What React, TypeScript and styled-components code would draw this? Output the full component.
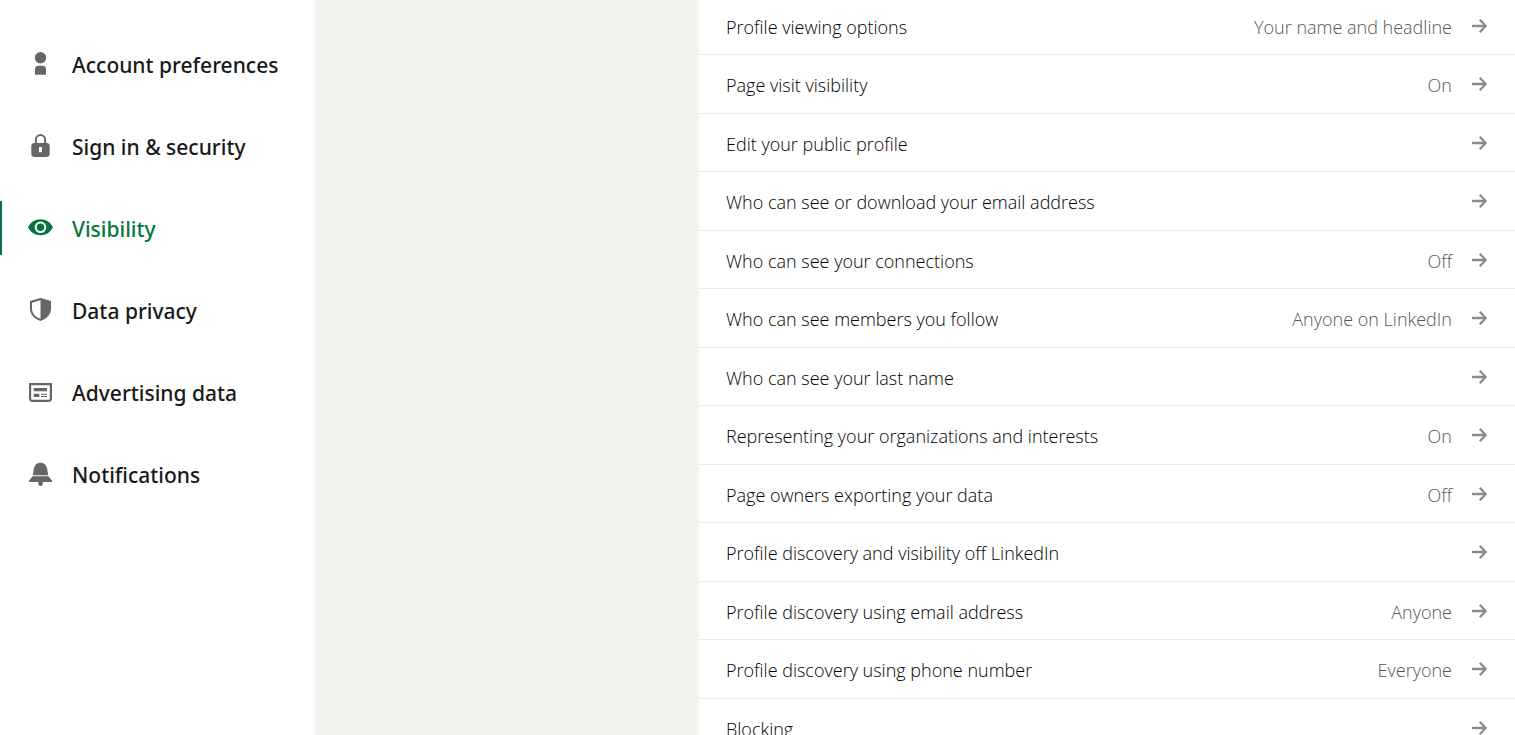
import React from "react";
import styled, { createGlobalStyle } from "styled-components";

const GlobalStyle = createGlobalStyle`
  *, *::before, *::after { box-sizing: border-box; }
  body {
    margin: 0;
    background: #f3f2ee;
    font-family: "Open Sans", "Noto Sans", sans-serif;
  }
`;

const Page = styled.div`
  display: grid;
  grid-template-columns: 315px minmax(0, 1fr);
  height: 100vh;
  overflow: hidden;
`;

const Sidebar = styled.nav`
  display: flex;
  flex-direction: column;
  gap: 28px;
  padding-top: 37px;
  background: #fff;
`;

const NavLink = styled.a<{ $active?: boolean }>`
  display: flex;
  align-items: center;
  gap: 18px;
  height: 54px;
  padding-left: 25px;
  border-left: 2px solid ${(p) => (p.$active ? "#057642" : "transparent")};
  color: ${(p) => (p.$active ? "#057642" : "#191919")};
  font-family: "Noto Sans", "Open Sans", sans-serif;
  font-size: 21px;
  font-weight: 500;
  line-height: 28px;
  text-decoration: none;
  white-space: nowrap;
`;

const NavIcon = styled.svg<{ $active?: boolean }>`
  flex: none;
  width: 27px;
  height: 28px;
  color: ${(p) => (p.$active ? "#057642" : "#666")};
`;

const NavLabel = styled.span`
  padding-top: 2px;
`;

const Main = styled.main`
  margin-left: 32%;
  background: #fff;
`;

const SettingsList = styled.ul`
  margin: -3px 0 0;
  padding: 0;
  list-style: none;
`;

const SettingItem = styled.li`
  height: 58px;
  border-bottom: 1px solid #ebebeb;

  &:nth-child(even) {
    height: 59px;
  }
`;

const SettingLink = styled.a`
  display: flex;
  align-items: center;
  gap: 20px;
  height: 100%;
  padding: 0 28px 0 27px;
  color: #000;
  font-size: 18px;
  font-weight: 300;
  line-height: 24px;
  text-decoration: none;
  white-space: nowrap;
`;

const SettingName = styled.span`
  flex: 1;
  padding-top: 2px;
`;

const SettingValue = styled.span`
  padding-top: 2px;
  color: #555;
`;

const Arrow = styled.svg`
  flex: none;
  width: 15px;
  height: 14px;
  color: #8c8c8c;
`;

const navItems: { label: string; active?: boolean; icon: React.ReactNode }[] = [
  {
    label: "Account preferences",
    icon: (
      <>
        <circle cx="13.5" cy="7.7" r="5.7" />
        <path d="M8 24.7v-5.4a3.6 3.6 0 0 1 3.6-3.6h3.8a3.6 3.6 0 0 1 3.6 3.6v5.4z" />
      </>
    ),
  },
  {
    label: "Sign in & security",
    icon: (
      <path
        fillRule="evenodd"
        d="M19.1 11h.3a3.3 3.3 0 0 1 3.3 3.3v7.4a3.3 3.3 0 0 1-3.3 3.3H7.6a3.3 3.3 0 0 1-3.3-3.3v-7.4A3.3 3.3 0 0 1 7.6 11h.3V7.6a5.6 5.6 0 0 1 11.2 0zM9.9 11h7.2V7.6a3.6 3.6 0 0 0-7.2 0zM12 15v5.3h3V15z"
      />
    ),
  },
  {
    label: "Visibility",
    active: true,
    icon: (
      <path
        fillRule="evenodd"
        d="M13.5 5.3C8 5.3 3.6 8.200 1 13.300c2.600 5.100 7 8 12.500 8s9.900-2.900 12.500-8c-2.600-5.100-7-8-12.500-8zm0 2.200a5.800 5.800 0 1 1 0 11.600 5.800 5.800 0 0 1 0-11.600zm0 2a3.800 3.800 0 1 0 0 7.600 3.800 3.800 0 0 0 0-7.600z"
      />
    ),
  },
  {
    label: "Data privacy",
    icon: (
      <path
        fillRule="evenodd"
        d="M13.5 2 24 5v7.500c0 5.500-3.800 10.400-10.500 12.500C6.800 22.900 3 18 3 12.500V5zm0 2.300L5 6.700v5.800c0 4.600 3 8.400 8.500 10.300z"
      />
    ),
  },
  {
    label: "Advertising data",
    icon: (
      <path
        fillRule="evenodd"
        d="M2 5h23v15.600a3.400 3.400 0 0 1-3.400 3.400H5.400A3.400 3.400 0 0 1 2 20.600zm2.200 2.200v13.300c0 .8.500 1.300 1.300 1.300h16c.8 0 1.300-.5 1.300-1.300V7.200zM6.700 10H20v3.200H6.700zm0 5.700h5.600V19H6.700zm7.300 0h6v1.100h-6zm0 2.200h6V19h-6z"
      />
    ),
  },
  {
    label: "Notifications",
    icon: (
      <>
        <path d="M5.800 15.200l.9-5.800c.5-4 3.300-6.700 6.800-6.700s6.300 2.700 6.800 6.700l.9 5.800z" />
        <path d="M5.500 16.200h16l3.500 4.600V22h-9.300v1.700a2.200 2.200 0 0 1-4.400 0V22H2v-1.200z" />
      </>
    ),
  },
];

const settings: { name: string; value?: string }[] = [
  { name: "Profile viewing options", value: "Your name and headline" },
  { name: "Page visit visibility", value: "On" },
  { name: "Edit your public profile" },
  { name: "Who can see or download your email address" },
  { name: "Who can see your connections", value: "Off" },
  { name: "Who can see members you follow", value: "Anyone on LinkedIn" },
  { name: "Who can see your last name" },
  { name: "Representing your organizations and interests", value: "On" },
  { name: "Page owners exporting your data", value: "Off" },
  { name: "Profile discovery and visibility off LinkedIn" },
  { name: "Profile discovery using email address", value: "Anyone" },
  { name: "Profile discovery using phone number", value: "Everyone" },
  { name: "Blocking" },
];

export default function App() {
  return (
    <>
      <GlobalStyle />
      <Page>
        <Sidebar aria-label="Settings">
          {navItems.map(({ label, active, icon }) => (
            <NavLink key={label} href="#" $active={active} aria-current={active ? "page" : undefined}>
              <NavIcon $active={active} viewBox="0 0 27 28" fill="currentColor" aria-hidden="true">
                {icon}
              </NavIcon>
              <NavLabel>{label}</NavLabel>
            </NavLink>
          ))}
        </Sidebar>
        <Main>
          <SettingsList>
            {settings.map(({ name, value }) => (
              <SettingItem key={name}>
                <SettingLink href="#">
                  <SettingName>{name}</SettingName>
                  {value && <SettingValue>{value}</SettingValue>}
                  <Arrow viewBox="0 0 15 14" fill="none" stroke="currentColor" strokeWidth="2.3" aria-hidden="true">
                    <path d="M0 7h13.500M7.800.8 13.700 7l-5.900 6.200" />
                  </Arrow>
                </SettingLink>
              </SettingItem>
            ))}
          </SettingsList>
        </Main>
      </Page>
    </>
  );
}
